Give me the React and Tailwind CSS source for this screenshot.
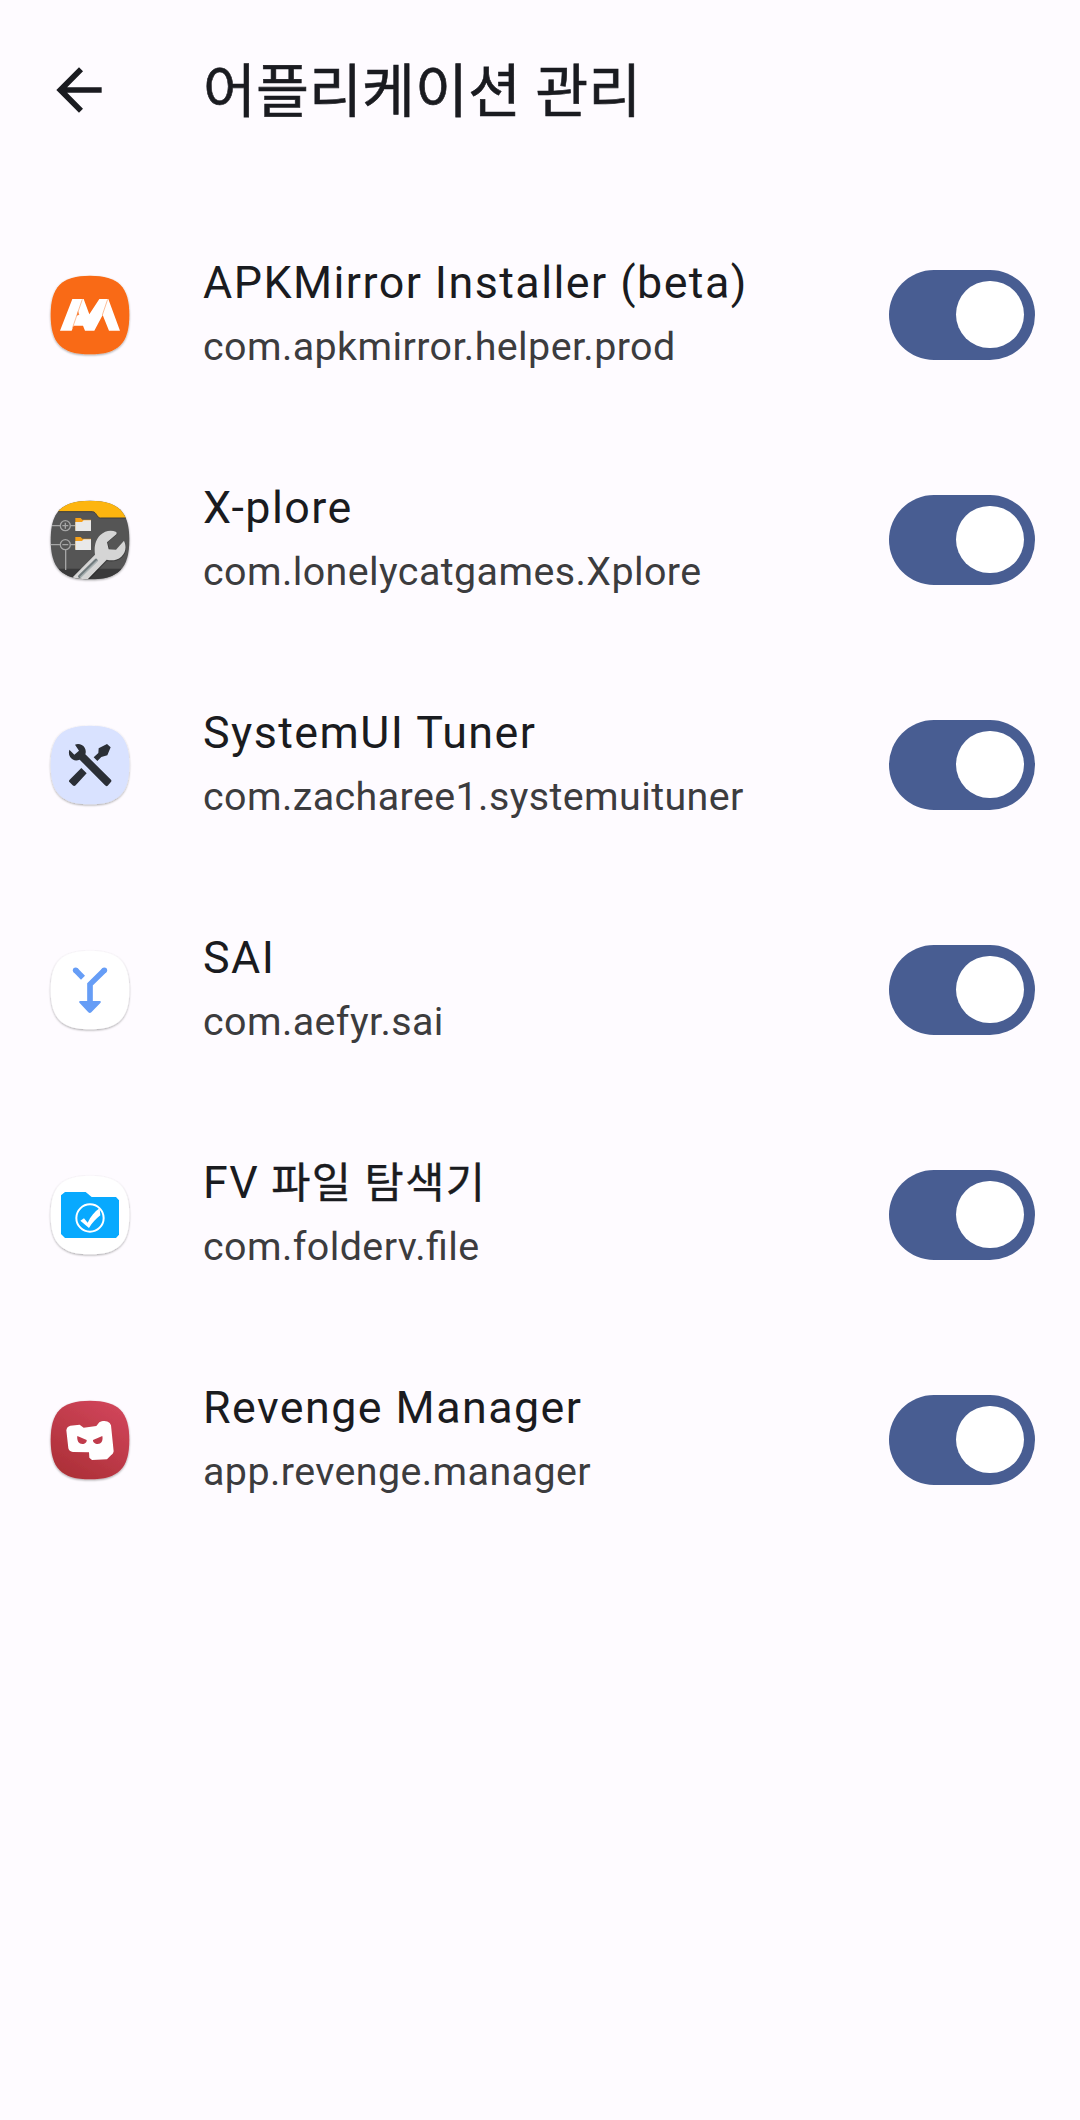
import { useState } from "react";

const SQUIRCLE = "M150 32C235 32 268 65 268 150C268 235 235 268 150 268C65 268 32 235 32 150C32 65 65 32 150 32Z";

/* Rounded launcher tile shared by every app icon */
function Tile({ id, fill, children }) {
    return (
        <svg className="size-[100px] shrink-0" viewBox="0 0 300 300" fill="none">
            <defs>
                <clipPath id={`clip-${id}`}>
                    <path d={SQUIRCLE} />
                </clipPath>
                <filter id={`shadow-${id}`} x="-10%" y="-10%" width="120%" height="120%">
                    <feDropShadow dx="0" dy="3" stdDeviation="2.5" floodColor="#000" floodOpacity="0.36" />
                </filter>
            </defs>
            <path d={SQUIRCLE} fill={fill} filter={`url(#shadow-${id})`} />
            <g clipPath={`url(#clip-${id})`}>{children}</g>
        </svg>
    );
}

function ApkMirrorIcon() {
    return (
        <Tile id="apkmirror" fill="#f96a12">
            <path d="M97 102H131L148 148L178 102H205L240 197H207L188 150L163 197H135L129 182H101L95 197H60Z" fill="#fff" />
            <path d="M127 103L97 190M203 103L187 150" stroke="#f96a12" strokeWidth="2" opacity="0.65" />
            <path d="M114 138L118 149L110 152Z" fill="#f96a12" opacity="0.8" />
        </Tile>
    );
}

function XploreIcon() {
    return (
        <Tile id="xplore" fill="#545455">
            <path d="M20 20H280V84H181C170 84 170 65 157 65H20Z" fill="#fdb50f" />
            <path d="M20 65H157C170 65 170 84 181 84H280" stroke="#3d3d3e" strokeWidth="3" />
            <path d="M20 236H280V280H20Z" fill="#3a3a3b" />
            <g stroke="#a5a5a5" strokeWidth="4">
                <path d="M28 107H61M91 107H106M28 164H61M91 164H106M77 180V240" />
                <circle cx="76" cy="107" r="15" />
                <circle cx="76" cy="164" r="15" />
                <path d="M67 107H85M76 98V116M67 164H85" />
            </g>
            <g>
                <path d="M106 84H122L127 89H153V121H106Z" fill="#f6a11a" />
                <path d="M106 96H126L131 91H153V123H106Z" fill="#e9e9e9" />
                <path d="M106 141H122L127 146H153V178H106Z" fill="#f6a11a" />
                <path d="M106 153H126L131 148H153V180H106Z" fill="#e9e9e9" />
            </g>
            <path
                d="M100 280L172 202C163 175 167 150 184 135C196 124 213 120 226 126L233 132L203 157L209 177L229 181L253 153C262 170 260 190 245 203C232 214 215 216 201 213L137 280Z"
                fill="#222"
                opacity="0.45"
            />
            <path
                d="M88 272L165 194C162 172 165 150 181 135C195 122 213 119 229 126L230 132L201 157L206 178L228 179L252 152C260 169 258 187 244 200C231 211 216 213 200 209L139 272Z"
                fill="#d5d5d5"
            />
            <path d="M119 259L168 211" stroke="#717b7e" strokeWidth="10" strokeLinecap="round" />
            <path d="M122 261L171 213" stroke="#a7b0b2" strokeWidth="4" strokeLinecap="round" />
        </Tile>
    );
}

function TunerIcon() {
    return (
        <Tile id="tuner" fill="#d9e2ff">
            <g fill="#2b2f36">
                <path d="M105 89C115 85 128 88 134 98C138 105 138 112 136 118L213 194C215 197 215 199 212 202L203 212C200 214 198 214 195 211L119 134C108 139 97 136 91 127C86 120 86 111 88 104L103 119L117 107Z" />
                <path d="M124 159L140 175L107 211C104 214 101 214 98 211L89 202C86 199 86 197 89 194Z" />
                <path d="M176 100L201 87L212 97L202 121L184 126L172 138L161 127L175 114Z" />
            </g>
        </Tile>
    );
}

function SaiIcon() {
    return (
        <Tile id="sai" fill="#fff">
            <g stroke="#669df6" strokeWidth="17">
                <path d="M107 91L129 113" />
                <path d="M193 91L150 133V190" />
            </g>
            <circle cx="107" cy="91" r="8.5" fill="#669df6" />
            <circle cx="193" cy="91" r="8.5" fill="#669df6" />
            <path d="M120 183H180C183 184 183 187 181 189L154 217C151 220 148 220 145 217L119 189C117 187 117 184 120 183Z" fill="#669df6" />
        </Tile>
    );
}

function FvIcon() {
    return (
        <Tile id="fv" fill="#fff">
            <path d="M75 81H137L155 96H228L237 106V209L228 219H75L63 207V91Z" fill="#08a9fe" />
            <circle cx="150" cy="159" r="41" stroke="#fff" strokeWidth="6" />
            <path d="M121 167L132 160L143 173C152 155 163 140 179 130L181 151C168 161 156 174 147 189Z" fill="#fff" />
        </Tile>
    );
}

function RevengeIcon() {
    return (
        <Tile id="revenge" fill="url(#revenge-bg)">
            <defs>
                <linearGradient id="revenge-bg" x1="220" y1="40" x2="90" y2="260" gradientUnits="userSpaceOnUse">
                    <stop stopColor="#d0455a" />
                    <stop offset="1" stopColor="#ad3038" />
                </linearGradient>
            </defs>
            <path
                d="M91 107L119 104L131 113L169 108L178 97C187 91 202 91 209 99L213 106L221 184C220 190 217 193 213 196L201 208L156 210L148 203L147 187L99 186C91 185 86 181 85 175L79 121C80 113 84 109 91 107Z"
                fill="#fff"
            />
            <path d="M112 138L140 150C141 157 135 162 127 162C117 162 110 153 112 138Z" fill="#c03b4b" />
            <path d="M187 138L159 150C158 157 165 162 173 162C183 162 190 153 187 138Z" fill="#c03b4b" />
        </Tile>
    );
}

const APPS = [
    { name: "APKMirror Installer (beta)", pkg: "com.apkmirror.helper.prod", Icon: ApkMirrorIcon },
    { name: "X-plore", pkg: "com.lonelycatgames.Xplore", Icon: XploreIcon },
    { name: "SystemUI Tuner", pkg: "com.zacharee1.systemuituner", Icon: TunerIcon },
    { name: "SAI", pkg: "com.aefyr.sai", Icon: SaiIcon },
    { name: "FV", nameKo: "파일 탐색기", pkg: "com.folderv.file", Icon: FvIcon },
    { name: "Revenge Manager", pkg: "app.revenge.manager", Icon: RevengeIcon },
];

function Toggle({ checked, onChange, label }) {
    return (
        <button
            type="button"
            role="switch"
            aria-checked={checked}
            aria-label={label}
            onClick={onChange}
            className={`flex h-[90px] w-[146px] shrink-0 cursor-pointer items-center rounded-full px-[11.25px] ${checked ? "justify-end bg-[#485d92]" : "justify-start bg-[#c5c6d0]"}`}
        >
            <span className="size-[67.5px] rounded-full bg-white" />
        </button>
    );
}

function AppRow({ name, nameKo, pkg, Icon }) {
    const [enabled, setEnabled] = useState(true);
    return (
        <li className="flex h-[225px] items-center pr-[45px] pl-10">
            <Icon />
            <div className="ml-[63px] min-w-0 flex-1">
                <p className="h-16 text-[44.8px] leading-[64px] tracking-[1.45px] whitespace-nowrap text-[#1a1b20]">
                    {name}
                    {nameKo && <span className="text-[42.6px] leading-none [-webkit-text-stroke:0.4px]"> {nameKo}</span>}
                </p>
                <p className="h-16 text-[39.4px] leading-[64px] tracking-[0.42px] whitespace-nowrap text-[#3c3c3e] [font-feature-settings:'liga'_1]">
                    {pkg}
                </p>
            </div>
            <Toggle checked={enabled} label={name} onChange={() => setEnabled(!enabled)} />
        </li>
    );
}

export default function App() {
    return (
        <div className="flex h-[2120px] w-[1080px] flex-col bg-[#fefbff] font-['Roboto','Noto_Sans_CJK_KR',sans-serif]">
            <header className="flex h-[180px] items-center pl-[45px]">
                <button type="button" aria-label="뒤로" className="cursor-pointer">
                    <svg className="size-[68px]" viewBox="0 0 24 24" fill="#1a1b20">
                        <path d="M20 11H7.83l5.59-5.59L12 4l-8 8 8 8 1.41-1.41L7.83 13H20v-2z" />
                    </svg>
                </button>
                <h1 className="ml-[90px] pt-[6px] text-[57.6px] leading-[80px] whitespace-nowrap text-[#1a1b20] [-webkit-text-stroke:0.6px]">
                    어플리케이션 관리
                </h1>
            </header>
            <ul className="mt-[22px]">
                {APPS.map((app) => (
                    <AppRow key={app.pkg} {...app} />
                ))}
            </ul>
        </div>
    );
}
